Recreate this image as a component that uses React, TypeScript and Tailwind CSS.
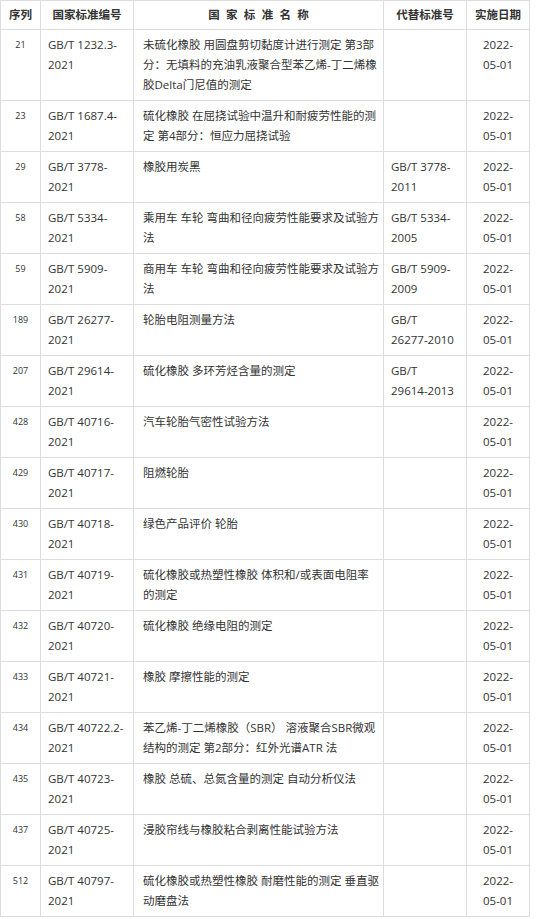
import React from "react";

type Row = {
  no: string;
  code: string[];
  name: string[];
  rep: string[];
};

const rows: Row[] = [
  {
    no: "21",
    code: ["GB/T 1232.3-", "2021"],
    name: [
      "未硫化橡胶 用圆盘剪切黏度计进行测定 第3部",
      "分：无填料的充油乳液聚合型苯乙烯-丁二烯橡",
      "胶Delta门尼值的测定",
    ],
    rep: [],
  },
  {
    no: "23",
    code: ["GB/T 1687.4-", "2021"],
    name: ["硫化橡胶 在屈挠试验中温升和耐疲劳性能的测", "定 第4部分：恒应力屈挠试验"],
    rep: [],
  },
  { no: "29", code: ["GB/T 3778-", "2021"], name: ["橡胶用炭黑"], rep: ["GB/T 3778-", "2011"] },
  {
    no: "58",
    code: ["GB/T 5334-", "2021"],
    name: ["乘用车 车轮 弯曲和径向疲劳性能要求及试验方", "法"],
    rep: ["GB/T 5334-", "2005"],
  },
  {
    no: "59",
    code: ["GB/T 5909-", "2021"],
    name: ["商用车 车轮 弯曲和径向疲劳性能要求及试验方", "法"],
    rep: ["GB/T 5909-", "2009"],
  },
  { no: "189", code: ["GB/T 26277-", "2021"], name: ["轮胎电阻测量方法"], rep: ["GB/T", "26277-2010"] },
  { no: "207", code: ["GB/T 29614-", "2021"], name: ["硫化橡胶 多环芳烃含量的测定"], rep: ["GB/T", "29614-2013"] },
  { no: "428", code: ["GB/T 40716-", "2021"], name: ["汽车轮胎气密性试验方法"], rep: [] },
  { no: "429", code: ["GB/T 40717-", "2021"], name: ["阻燃轮胎"], rep: [] },
  { no: "430", code: ["GB/T 40718-", "2021"], name: ["绿色产品评价 轮胎"], rep: [] },
  {
    no: "431",
    code: ["GB/T 40719-", "2021"],
    name: ["硫化橡胶或热塑性橡胶 体积和/或表面电阻率", "的测定"],
    rep: [],
  },
  { no: "432", code: ["GB/T 40720-", "2021"], name: ["硫化橡胶 绝缘电阻的测定"], rep: [] },
  { no: "433", code: ["GB/T 40721-", "2021"], name: ["橡胶 摩擦性能的测定"], rep: [] },
  {
    no: "434",
    code: ["GB/T 40722.2-", "2021"],
    name: ["苯乙烯-丁二烯橡胶（SBR） 溶液聚合SBR微观", "结构的测定 第2部分：红外光谱ATR 法"],
    rep: [],
  },
  { no: "435", code: ["GB/T 40723-", "2021"], name: ["橡胶 总硫、总氮含量的测定 自动分析仪法"], rep: [] },
  { no: "437", code: ["GB/T 40725-", "2021"], name: ["浸胶帘线与橡胶粘合剥离性能试验方法"], rep: [] },
  {
    no: "512",
    code: ["GB/T 40797-", "2021"],
    name: ["硫化橡胶或热塑性橡胶 耐磨性能的测定 垂直驱", "动磨盘法"],
    rep: [],
  },
];

function Lines({ lines }: { lines: string[] }) {
  return (
    <>
      {lines.map((l, i) => (
        <React.Fragment key={i}>
          {i > 0 && <br />}
          {l}
        </React.Fragment>
      ))}
    </>
  );
}

const td = "border border-[#dddddd] align-top py-[5px] whitespace-nowrap";

export default function App() {
  return (
    <div
      className="bg-white text-[#333333] min-h-[919px]"
      style={{ fontFamily: '"Open Sans", "Noto Sans CJK SC", sans-serif' }}
    >
      <table className="border-collapse table-fixed w-[529px] text-[11.5px] leading-[20px]">
        <colgroup>
          <col className="w-[40px]" />
          <col className="w-[93px]" />
          <col className="w-[250px]" />
          <col className="w-[83px]" />
          <col className="w-[63px]" />
        </colgroup>
        <thead>
          <tr className="font-bold">
            <th className="border border-[#dddddd] py-[4px] px-0 text-center font-bold">序列</th>
            <th className="border border-[#dddddd] py-[4px] px-0 text-center font-bold">国家标准编号</th>
            <th className="border border-[#dddddd] py-[4px] px-0 text-center font-bold tracking-[0.55em] pl-[0.55em]">
              国家标准名称
            </th>
            <th className="border border-[#dddddd] py-[4px] px-0 text-center font-bold">代替标准号</th>
            <th className="border border-[#dddddd] py-[4px] px-0 text-center font-bold">实施日期</th>
          </tr>
        </thead>
        <tbody>
          {rows.map((r) => (
            <tr key={r.no}>
              <td className={`${td} text-center text-[9px] px-0`}>
                <span className="leading-[20px] block">{r.no}</span>
              </td>
              <td className={`${td} px-[7px]`}>
                <Lines lines={r.code} />
              </td>
              <td className={`${td} px-[9px]`}>
                <Lines lines={r.name} />
              </td>
              <td className={`${td} px-[7px]`}>
                <Lines lines={r.rep} />
              </td>
              <td className={`${td} text-center px-0`}>
                <Lines lines={["2022-", "05-01"]} />
              </td>
            </tr>
          ))}
        </tbody>
      </table>
    </div>
  );
}
